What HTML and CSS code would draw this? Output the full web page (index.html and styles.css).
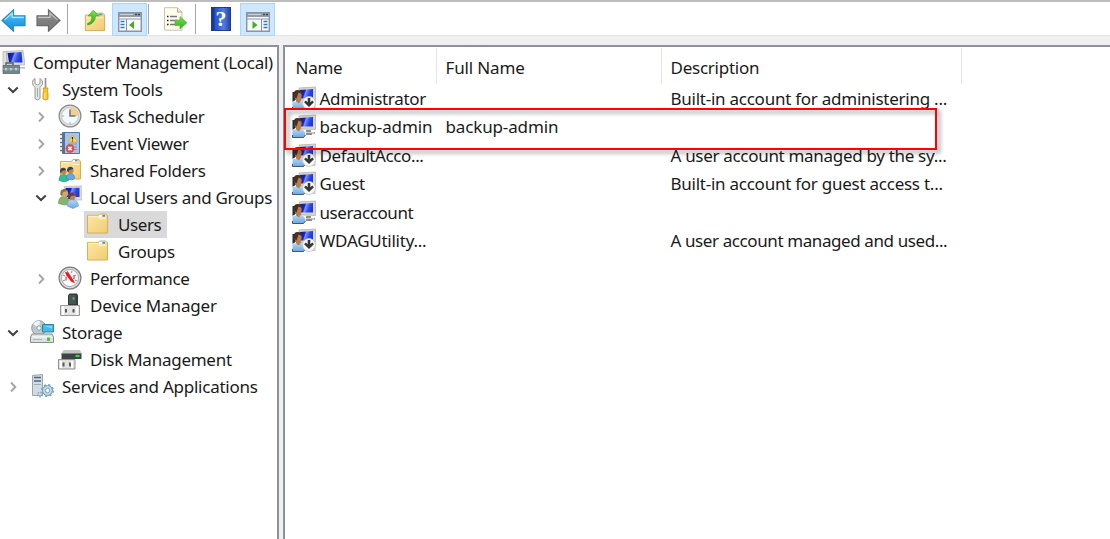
FILE: index.html
```html
<!DOCTYPE html>
<html lang="en">
<head>
<meta charset="utf-8">
<title>Computer Management</title>
<link rel="stylesheet" href="styles.css">
</head>
<body>
<svg class="defs" width="0" height="0" aria-hidden="true">
  <defs>
    <linearGradient id="blue" x1="0" y1="0" x2="1" y2=".25"><stop offset="0" stop-color="#0714a8"/><stop offset=".4" stop-color="#1226c4"/><stop offset=".5" stop-color="#7f95f5"/><stop offset=".75" stop-color="#3550e4"/><stop offset="1" stop-color="#1c37df"/></linearGradient>
    <linearGradient id="gold" x1="0" y1="0" x2="1" y2="1"><stop offset="0" stop-color="#ffe9a6"/><stop offset="1" stop-color="#f0cb72"/></linearGradient>
    <linearGradient id="sky" x1="0" y1="0" x2="0" y2="1"><stop offset="0" stop-color="#8bd8fb"/><stop offset=".5" stop-color="#28a9f0"/><stop offset="1" stop-color="#1687d6"/></linearGradient>
    <linearGradient id="steel" x1="0" y1="0" x2="0" y2="1"><stop offset="0" stop-color="#aaa"/><stop offset=".5" stop-color="#808080"/><stop offset="1" stop-color="#777"/></linearGradient>
    <linearGradient id="leaf" x1="0" y1="0" x2="0" y2="1"><stop offset="0" stop-color="#7be04d"/><stop offset="1" stop-color="#2fae19"/></linearGradient>
    <linearGradient id="shirt" x1="0" y1="0" x2="0" y2="1"><stop offset="0" stop-color="#b6daf8"/><stop offset="1" stop-color="#6ba6e0"/></linearGradient>
    <symbol id="folder" viewBox="0 0 24 22">
      <path d="M1.500 2.500h11l2-1.500h6l2 2v18h-21z" fill="url(#gold)" stroke="#d5ac58"/>
      <path d="M2.500 3.500h9.500l2 2.500h7.500" fill="none" stroke="#fff4cc"/>
      <rect x="13.500" y="2" width="7" height="2.600" fill="#fff"/><rect x="17" y="2" width="3" height="2" fill="#3c95df"/>
    </symbol>
    <symbol id="user" viewBox="0 0 24 24">
      <path d="M7 2 23.500 1v14.500L9 15z" fill="#d6d4cb" stroke="#b5b3aa" stroke-width=".8"/>
      <path d="M8 4l13-1v9.500H8z" fill="url(#blue)"/>
      <path d="M14 16h5v2h4v1.500h-3v1.500h-6z" fill="#8d8d89"/><path d="M14 18.500h8" stroke="#ddd" stroke-width=".8"/>
      <path d="M.5 6h5v3l-2 5-3 2z" fill="#242d34"/>
      <path d="M.5 23.500v-8h4.500l4-.5q4 1 4.500 6l-2 2.500z" fill="url(#shirt)"/>
      <path d="M.5 21v2.500h11l2-2.500" fill="none" stroke="#27384b" stroke-width=".8"/>
      <path d="M4 12v3.500l3 2 2-3v-3z" fill="#bd7b48"/>
      <ellipse cx="6" cy="9.500" rx="3.600" ry="4.500" fill="#bb7d4d"/>
      <path d="M1.800 9.500q-.8-5.500 4-5.500 4.500 0 4 4L6.500 6.500 4.500 12.500q-2.500-1-2.700-3z" fill="#49301f"/>
    </symbol>
    <symbol id="disabled" viewBox="0 0 24 24">
      <use href="#user"/>
      <path d="M20 13h3.500v10H18z" fill="#ccc"/>
      <circle cx="17" cy="17" r="6.500" fill="#f7f7f7" stroke="#c4c4c4" stroke-width=".8"/>
      <path d="M15.700 12h2.600v4.300l2-1.800 1.600 1.700-4.900 4.900-4.900-4.900 1.600-1.700 2 1.800z" fill="#353535"/>
    </symbol>
    <symbol id="computer" viewBox="0 0 24 24">
      <path d="M5 1.500 22 .5l2 14.500H7z" fill="#dedcd4" stroke="#b5b4ae" stroke-width=".8"/>
      <path d="M6.500 3 20.500 2l1 10.500H8z" fill="url(#blue)"/>
      <path d="M2 1.500h3.500v14H2z" fill="#e1e1dc" stroke="#aaa" stroke-width=".7"/>
      <path d="M18 17h6v1.500h-6z" fill="#bbb"/>
      <path d="M5 15v-2h7v2" fill="none" stroke="#56666b" stroke-width="1.500"/>
      <path d="M2 15.500h16.500v8H2z" fill="#70868b" stroke="#586b70" stroke-width=".8"/>
      <path d="M2 19h16" stroke="#a7babd"/><path d="M5 18v2.500M10 18v2.500M15 18v2.500" stroke="#f1f4f4"/>
    </symbol>
    <symbol id="tools" viewBox="0 0 24 24">
      <path d="M5 1.500v5l2.500 1.500L10 6.500v-5q3.500 2 2.500 6l-2.500 3v11q-2.500 3-5 0v-11q-2.500-2-2.500-5 0-3 2.500-4z" fill="#e5e5e2" stroke="#999995"/>
      <path d="M7.500 11v9" stroke="#aaa"/><path d="M15.500 1v11" stroke="#92958f" stroke-width="1.700"/>
      <path d="M13 11h5l-.8 3 .8 2v6q-2.500 2-5 0v-6l.8-2z" fill="#ffc521" stroke="#d48e12" stroke-width=".8"/>
      <path d="M15 16v6" stroke="#fff0a0"/>
    </symbol>
    <symbol id="clock" viewBox="0 0 24 24">
      <circle cx="12" cy="12" r="10.900" fill="#e1e2e2" stroke="#8b8b8b" stroke-width="1.200"/>
      <circle cx="12" cy="12" r="8.500" fill="#f1f8ff" stroke="#bfc3c5"/>
      <path d="M12 3.500A8.500 8.500 0 0 1 20.500 12H12z" fill="#f8cf85"/>
      <path d="M12 5.500V12h5.500" fill="none" stroke="#63788a" stroke-width="1.500"/>
      <path d="M4.500 12h1M12 18.500v1" stroke="#777"/>
    </symbol>
    <symbol id="event" viewBox="0 0 24 24">
      <path d="M4.500 1.500h17v21h-17z" fill="#a9c4e7" stroke="#55769d"/>
      <path d="M6 2v20" stroke="#4c7099" stroke-width="2"/>
      <path d="M2 3.500h5M2 7.500h5M2 11.500h5M2 15.500h5M2 19.500h5" stroke="#657482" stroke-width="1.500"/>
      <path d="M14.500 4 19.500 11h-9z" fill="#ffe34a" stroke="#cfa622" stroke-width=".7"/>
      <path d="M14.500 6v2.500M14.500 9.500v1" stroke="#222" stroke-width="1.300"/>
      <path d="M10 13h9M16 16h3M16 18.500h3" stroke="#7c98bb"/>
      <circle cx="12" cy="17.500" r="4" fill="#e0534b" stroke="#c34440" stroke-width=".6"/>
      <path d="m10.400 15.900 3.200 3.200m0-3.200-3.200 3.200" stroke="#fff" stroke-width="1.500"/>
    </symbol>
    <symbol id="shared" viewBox="0 0 24 24">
      <path d="M2.500 3.500h11l1.500-2h6l1.500 2v17.500h-20z" fill="url(#gold)" stroke="#d5ac58"/>
      <path d="M3.500 4.500h10l1.500 2h6" fill="none" stroke="#fff4cc"/><path d="M15 3h5" stroke="#fff" stroke-width="2"/><path d="M17 2.700h2.500" stroke="#3c95df" stroke-width="1.500"/>
      <path d="M1 22.500q0-6 4.500-6t5 6l-4 1.500z" fill="#34bd94" stroke="#1b8e6c" stroke-width=".6"/><circle cx="5.500" cy="13.500" r="3" fill="#bd8651"/><path d="M2 14q0-5 5-4l1 2-4 1-1 2z" fill="#36444b"/>
      <path d="M8.500 20.500q0-5 4-5t4 5l-3 1.500z" fill="#61a8e8" stroke="#367bb9" stroke-width=".6"/><circle cx="12.500" cy="12.500" r="3" fill="#bd8651"/><path d="M9 13q0-5 5-4l1.500 2-4 1-1 2z" fill="#36444b"/>
    </symbol>
    <symbol id="group" viewBox="0 0 24 24">
      <path d="M6 1.500 24 1v14H8z" fill="#ddddda" stroke="#bbbbc0" stroke-width=".8"/><path d="M7.500 3l14-.3V12H8z" fill="url(#blue)"/>
      <path d="M.5 18.500q0-7 5-7t6 7l-5 1.500z" fill="#84b56b" stroke="#62904f" stroke-width=".6"/>
      <circle cx="6.500" cy="8.500" r="3.700" fill="#d2a66f"/><path d="M2.500 10q-1-7 5-6l2.500 2-5 1-1 4z" fill="#857545"/>
      <path d="M9 21q0-6 5-6.500 6 0 6.500 6.500l-5.500 2.500z" fill="url(#shirt)" stroke="#6e9ac6" stroke-width=".6"/>
      <circle cx="14" cy="11.500" r="3.700" fill="#bd865e"/><path d="M10 14q-1.500-7 5-6.500l3 3-5 .5-1 3z" fill="#634338"/>
    </symbol>
    <symbol id="gauge" viewBox="0 0 24 24">
      <circle cx="12" cy="12" r="10.900" fill="#ddd" stroke="#7d7d7d" stroke-width="1.200"/><circle cx="12" cy="12" r="8.500" fill="#fff" stroke="#aaa"/>
      <path d="M5 9l2 1M9 5l1 2M14 5l-.5 2M18 9l-2 1M5 15l2-1M19 15l-2-1" stroke="#99a" stroke-width="1.200"/>
      <path d="M7 6l3.500.5 5.500 8.500 1 2.500-4-2L8 9z" fill="#e11e22"/><path d="M8 10.500v4M16 9v4" stroke="#e66" stroke-width="1.500"/>
    </symbol>
    <symbol id="device" viewBox="0 0 24 24">
      <path d="M10 2.500l1.500-2H19l1 2V13H10z" fill="#343b3e"/><path d="M11 2h7v9h-7z" fill="#4c5355"/><path d="M14.500 4.500h2v2h-2z" fill="#37db39"/>
      <path d="M2.500 12.500h19v10h-19z" fill="#e4e4e2" stroke="#999"/><path d="M5 13v9M19 13v9" stroke="#fff" stroke-width="2"/>
      <path d="M7 16h2v3.500H7zM14.500 16h2v3.500h-2z" fill="#555a5b"/>
    </symbol>
    <symbol id="disk" viewBox="0 0 24 24">
      <path d="M3.500 6h20v6h-20z" fill="#3c4446"/><path d="M5.500 3H22l1.500 3.500h-20z" fill="#c0c4c3"/><path d="M17.500 8h4v2h-4z" fill="#32df40"/>
      <path d="M.5 12.500h16.500v9.500H.5z" fill="#e0e0dc" stroke="#929292"/><path d="M3 14v7M14 14v7" stroke="#fff" stroke-width="2"/><path d="M4.500 15.500h2v4h-2zM11 15.500h2v4h-2z" fill="#555a5a"/>
    </symbol>
    <symbol id="storage" viewBox="0 0 24 24">
      <circle cx="9" cy="8" r="7.300" fill="#bfc9cc" stroke="#8e999c"/><path d="M9 8 3 4q3-4 7-3z" fill="#edf4f4"/><circle cx="9" cy="8" r="2.200" fill="#fff" stroke="#899"/>
      <path d="M12.500 4.500h11v7.500h-11z" fill="#48b8e5" stroke="#2389b3"/><path d="M14 6h8v2.500z" fill="#83d9f8"/>
      <path d="M2 14h20l1.500 3v5.500H.5V17z" fill="#dbe1e2" stroke="#848f8f"/><path d="M2 17h20" stroke="#fff"/><path d="M17 17.500h3v3.500h-3z" fill="#51c629"/><path d="M3 19.500h9" stroke="#adb5b4"/>
    </symbol>
    <symbol id="services" viewBox="0 0 24 24">
      <path d="M2.500 1.500 12.500.5v21h-10z" fill="#d1dbe2" stroke="#98a6b1"/><path d="M4 3.500h7M4 7h7" stroke="#536675" stroke-width="1.600"/><path d="M4 10.500h7" stroke="#9cabb7"/>
      <circle cx="17.500" cy="16.500" r="5" fill="#c4d9e9" stroke="#799fbe" stroke-width="1"/>
      <circle cx="17.500" cy="16.500" r="5.500" fill="none" stroke="#7aa2c2" stroke-width="2" stroke-dasharray="2.160 2.160"/><circle cx="17.500" cy="16.500" r="2.200" fill="#fff" stroke="#799fbe"/>
      <circle cx="10" cy="20.500" r="2.300" fill="none" stroke="#8ba8be" stroke-width="1.500" stroke-dasharray="1.500 1"/>
    </symbol>
    <symbol id="panel" viewBox="0 0 24 20">
      <path d="M.7.7h22.600v18.600H.7z" fill="#f7f9fa" stroke="#8c959f" stroke-width="1.400"/><path d="M1 1h22v4H1z" fill="#929da9"/><path d="M2 2.500h13" stroke="#c8d0d7"/><path d="M17 2.500h2M20 2.500h2" stroke="#34495f" stroke-width="1.500"/><path d="M1 7h22" stroke="#8e9aa5"/>
    </symbol>
    <symbol id="down" viewBox="0 0 12 12"><path d="m1.300 3.500 4.700 4.500 4.700-4.500" fill="none" stroke="#404040" stroke-width="2"/></symbol>
    <symbol id="right" viewBox="0 0 12 12"><path d="m4 1.500 4.300 4.500L4 10.500" fill="none" stroke="#a6a6a6" stroke-width="1.900"/></symbol>
  </defs>
</svg>

<div class="window">
  <header class="toolbar">
    <svg class="arrow back" viewBox="0 0 24 22"><path d="M1 11 12 .8v5.700h11v9.500H12v5.200z" fill="url(#sky)" stroke="#3088bd" stroke-width="1.200"/><path d="M3.500 10.500 10.800 4v4H22" fill="none" stroke="#b8eaff" stroke-width="1"/></svg>
    <svg class="arrow forward" viewBox="0 0 24 22"><path d="M23 11 12 .8v5.700H1v9.500h11v5.200z" fill="url(#steel)" stroke="#6b6b6b" stroke-width="1.200"/><path d="M2 8h11.500V4l7 6.500" fill="none" stroke="#c5c5c5"/></svg>
    <i class="divider first"></i>
    <svg class="up" viewBox="0 0 24 24"><path d="M1.500 6h10l2-2h7l2 2v17h-21z" fill="url(#gold)" stroke="#cfa755"/><path d="M2.500 9h19" stroke="#fff0b4"/><path d="M16 5.500h4" stroke="#4aa6e5" stroke-width="2"/><path d="M4 15q5-1 4.500-8H4.500L10 .8l6.500 6.200h-4q0 8-8.500 10z" fill="url(#leaf)" stroke="#45a82c" stroke-width=".8"/></svg>
    <span class="toggle tree-toggle"><svg viewBox="0 0 24 20"><use href="#panel"/><path d="M8.500 7v12" stroke="#8492a0"/><path d="M2.500 9.500h4M2.500 12.500h4M2.500 15.500h4" stroke="#3679bd" stroke-width="1.400"/><path d="M16 9v8l-5-4z" fill="#43af20"/></svg></span>
    <i class="divider second"></i>
    <svg class="export" viewBox="0 0 25 24"><path d="M1.500.7h13l4.500 4.500v18H1.500z" fill="#fffce9" stroke="#c6c3b2"/><path d="M14.500.7v4.500H19" fill="#e7e4d2" stroke="#b8b5a2"/><path d="M7 9.500h7M7 13.500h7M7 17.500h7" stroke="#767391" stroke-width="1.400"/><path d="M4 9.500h1.500M4 13.500h1.500M4 17.500h1.500" stroke="#222" stroke-width="1.500"/><path d="M12 13h5V9.500l7 6.300-7 6.200v-3.500h-5z" fill="url(#leaf)" stroke="#55b83a" stroke-width=".7"/></svg>
    <i class="divider third"></i>
    <span class="help">?</span>
    <span class="toggle action-toggle"><svg viewBox="0 0 24 20"><use href="#panel"/><path d="M15.500 7v12" stroke="#8492a0"/><path d="M17.500 9.500h4M17.500 12.500h4M17.500 15.500h4" stroke="#3679bd" stroke-width="1.400"/><path d="M6.500 9v8l5-4z" fill="#43af20"/></svg></span>
  </header>

  <main class="panes">
    <nav class="tree">
      <div class="node root"><svg class="icon"><use href="#computer"/></svg><span class="label tight">Computer Management (Local)</span></div>
      <div class="node level1"><svg class="chev"><use href="#down"/></svg><svg class="icon"><use href="#tools"/></svg><span class="label">System Tools</span></div>
      <div class="node level2"><svg class="chev"><use href="#right"/></svg><svg class="icon"><use href="#clock"/></svg><span class="label tight">Task Scheduler</span></div>
      <div class="node level2"><svg class="chev"><use href="#right"/></svg><svg class="icon"><use href="#event"/></svg><span class="label tight">Event Viewer</span></div>
      <div class="node level2"><svg class="chev"><use href="#right"/></svg><svg class="icon"><use href="#shared"/></svg><span class="label">Shared Folders</span></div>
      <div class="node level2"><svg class="chev"><use href="#down"/></svg><svg class="icon"><use href="#group"/></svg><span class="label tight">Local Users and Groups</span></div>
      <div class="node level3"><div class="leaf selected"><svg class="icon"><use href="#folder"/></svg><span class="label tighter">Users</span></div></div>
      <div class="node level3"><div class="leaf"><svg class="icon"><use href="#folder"/></svg><span class="label">Groups</span></div></div>
      <div class="node level2"><svg class="chev"><use href="#right"/></svg><svg class="icon"><use href="#gauge"/></svg><span class="label tighter">Performance</span></div>
      <div class="node level2"><i class="chev"></i><svg class="icon"><use href="#device"/></svg><span class="label wide">Device Manager</span></div>
      <div class="node level1"><svg class="chev"><use href="#down"/></svg><svg class="icon"><use href="#storage"/></svg><span class="label">Storage</span></div>
      <div class="node level2"><i class="chev"></i><svg class="icon"><use href="#disk"/></svg><span class="label">Disk Management</span></div>
      <div class="node level1"><svg class="chev"><use href="#right"/></svg><svg class="icon"><use href="#services"/></svg><span class="label">Services and Applications</span></div>
    </nav>
    <section class="list">
      <div class="columns"><span>Name</span><span class="wide">Full Name</span><span>Description</span></div>
      <div class="row"><svg class="icon"><use href="#disabled"/></svg><span class="name tight">Administrator</span><span class="full"></span><span class="desc">Built-in account for administering ...</span></div>
      <div class="row"><svg class="icon"><use href="#user"/></svg><span class="name wide">backup-admin</span><span class="full wide">backup-admin</span><span class="desc"></span></div>
      <div class="row"><svg class="icon"><use href="#disabled"/></svg><span class="name tighter">DefaultAcco...</span><span class="full"></span><span class="desc tight">A user account managed by the sy...</span></div>
      <div class="row"><svg class="icon"><use href="#disabled"/></svg><span class="name">Guest</span><span class="full"></span><span class="desc">Built-in account for guest access t...</span></div>
      <div class="row"><svg class="icon"><use href="#user"/></svg><span class="name tighter">useraccount</span><span class="full"></span><span class="desc"></span></div>
      <div class="row"><svg class="icon"><use href="#disabled"/></svg><span class="name">WDAGUtility...</span><span class="full"></span><span class="desc tighter">A user account managed and used...</span></div>
      <div class="highlight"></div>
    </section>
  </main>
</div>
</body>
</html>
```

FILE: styles.css
```css
* { box-sizing: border-box; }
body { margin: 0; overflow: hidden; background: #f0f0f0; color: #1a1a1a; font: 17px/27px "Noto Sans", "Open Sans", sans-serif; letter-spacing: -.25px; }
.defs { position: absolute; }
svg { display: block; flex: none; }
.window { width: 1110px; height: 539px; display: flex; flex-direction: column; }
.tight { letter-spacing: -.31px; }
.tighter { letter-spacing: -.4px; }
.wide { letter-spacing: -.14px; }

.toolbar { height: 36px; flex: none; display: flex; align-items: center; background: #fff; border-top: 2px solid #bdbdbd; border-bottom: 1px solid #e4e4e4; padding-top: 1px; }
.arrow { width: 25px; height: 23px; margin-top: 2px; }
.back { margin-left: 1px; }
.forward { margin-left: 10px; }
.divider { width: 1px; height: 30px; background: #a6a6a6; }
.divider.first { margin-left: 6px; }
.up { width: 22px; height: 23px; margin-left: 16px; margin-top: 2px; }
.toggle { width: 35px; height: 33px; display: flex; align-items: center; justify-content: center; background: #cce8ff; border: 1px solid #a9d7fb; }
.toggle svg { width: 24px; height: 20px; margin-top: 5px; }
.tree-toggle { margin-left: 6px; }
.divider.second { margin-left: 1px; }
.export { width: 25px; height: 24px; margin-left: 14px; }
.divider.third { margin-left: 7px; }
.help { width: 20px; height: 24px; margin-left: 15px; background: linear-gradient(90deg, #173895 0 2px, #2453c7 3px, #527be0 65%, #2447aa); border: 1px solid #203c8c; color: #fff; font: bold 22px/22px "Liberation Serif", serif; text-align: center; letter-spacing: 0; }
.action-toggle { margin-left: 9px; }

.panes { flex: 1; min-height: 0; margin-top: 9px; display: flex; gap: 4px; }
.tree { width: 279px; background: #fff; border: solid #8b929e; border-width: 2px 2px 0 0; padding-top: 2px; }
.node { height: 27px; display: flex; align-items: center; white-space: nowrap; }
.icon { width: 24px; height: 24px; }
.node .icon { margin-bottom: 2px; }
.root { padding-left: 1px; }
.label { margin-left: 7px; }
.root .label { margin-left: 8px; }
.level1 { padding-left: 7px; }
.level1 .label { margin-left: 8px; }
.level2 { padding-left: 35px; }
.level2 .label { margin-left: 8px; }
.level3 { padding-left: 84px; }
.chev { width: 12px; height: 12px; flex: none; margin-right: 11px; }
.leaf { height: 27px; display: flex; align-items: center; padding: 0 6px 0 2px; }
.leaf .label { margin-left: 9px; }
.leaf .icon { width: 23px; height: 21px; }
.selected { background: #d9d9d9; }

.list { position: relative; flex: 1; background: #fff; border: solid #8b929e; border-width: 2px 0 0 2px; }
.columns { height: 37px; display: grid; grid-template-columns: 152px 225px 300px; padding-top: 1px; }
.columns span { height: 36px; line-height: 39px; padding-left: 8.500px; border-right: 1px solid #e5e5e5; }
.columns span:first-child { padding-left: 10.500px; }
.row { height: 28.500px; display: grid; grid-template-columns: 24px 119px 225px 290px; align-items: center; padding-left: 7px; white-space: nowrap; }
.row .icon { margin-bottom: 1px; }
.row .name { padding-left: 3.500px; }
.row .full, .row .desc { padding-left: 10.500px; }
.highlight { position: absolute; left: -1px; top: 61px; width: 653px; height: 42px; border: 2px solid #f00; filter: drop-shadow(3px 3px 2px rgba(0,0,0,.45)); }
```
